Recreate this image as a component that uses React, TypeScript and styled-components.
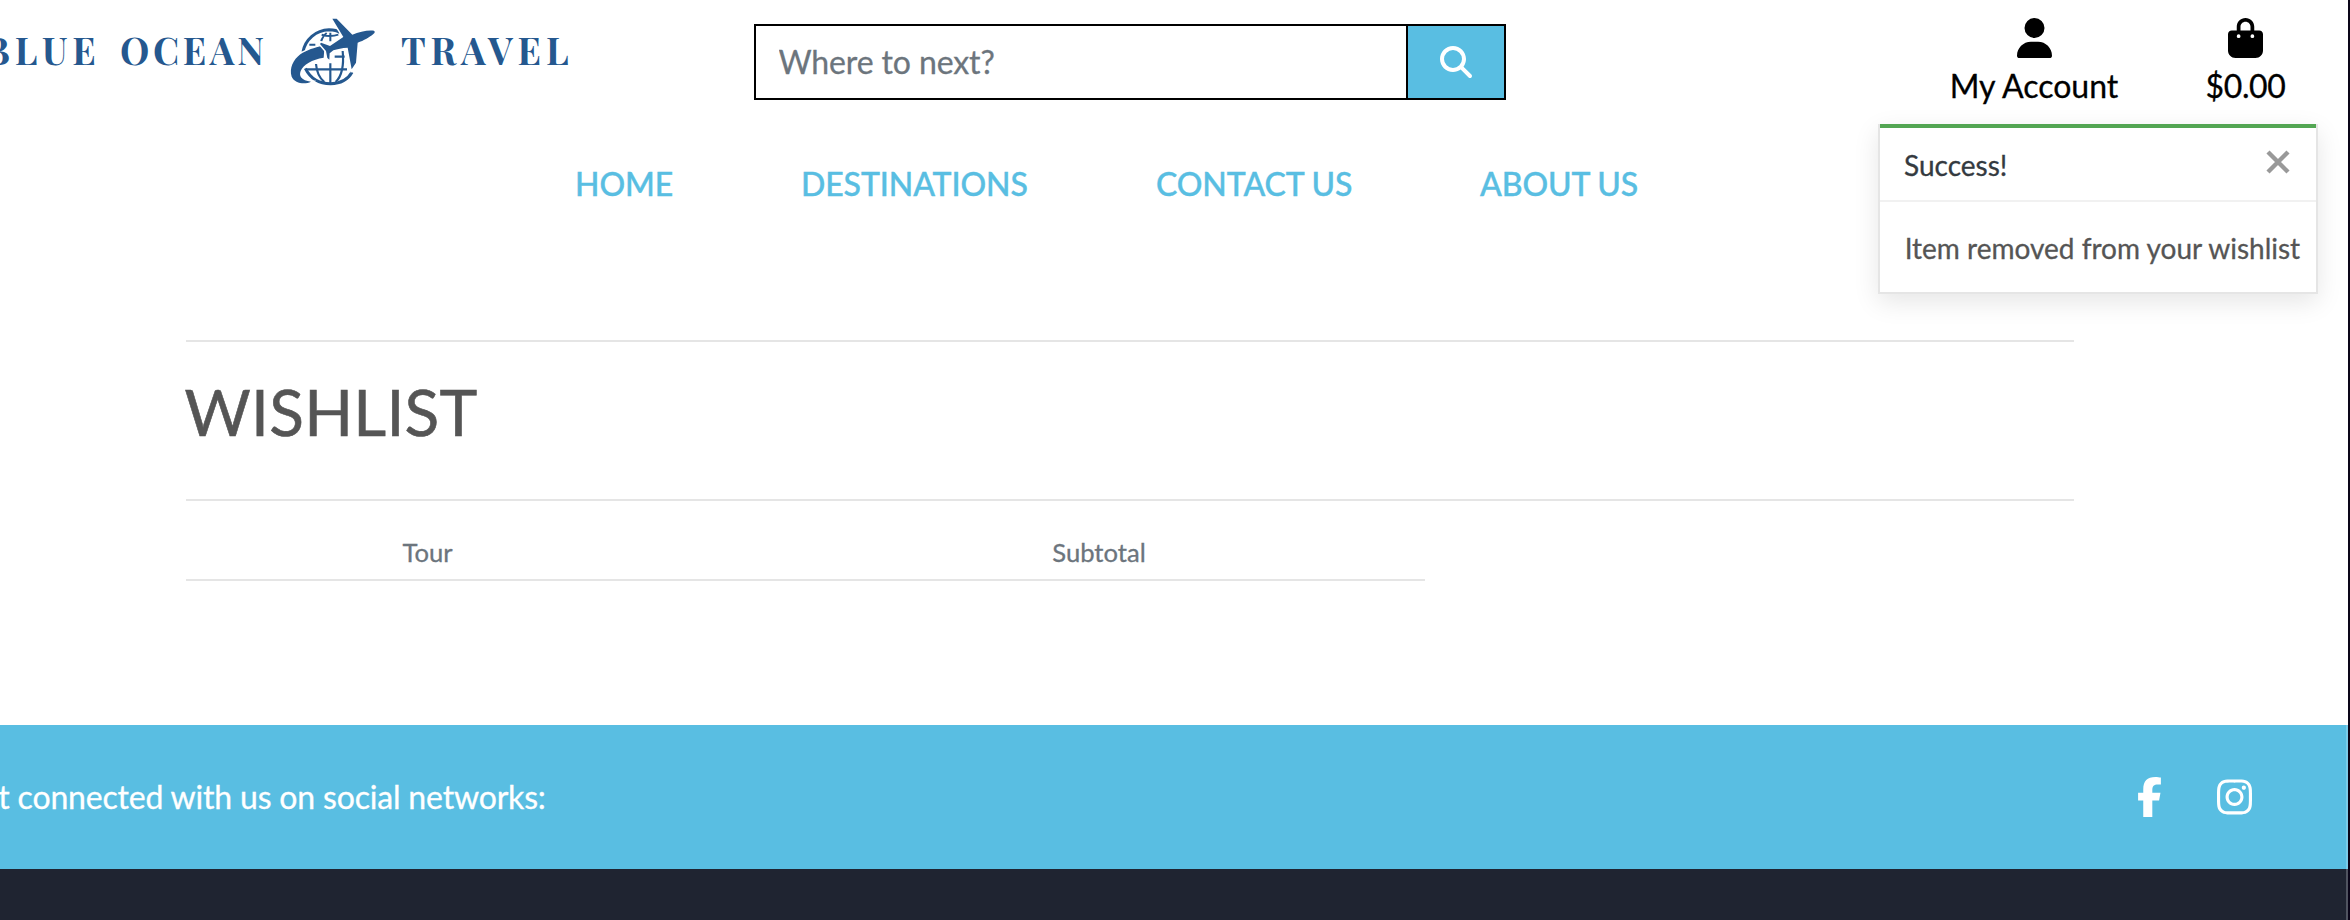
import React from "react";
import styled, { createGlobalStyle, css } from "styled-components";
import { FaUser, FaBagShopping, FaMagnifyingGlass, FaInstagram } from "react-icons/fa6";

const GlobalStyle = createGlobalStyle`
  * { box-sizing: border-box; }
  body {
    margin: 0;
    background: #fff;
    color: #555;
    font-family: Lato, "Liberation Sans", sans-serif;
    font-size: 32px;
    line-height: 1.5;
    overflow: hidden;
    -webkit-text-stroke: 0.3px;
  }
`;

const Page = styled.div`
  position: relative;
  width: 2350px;
  height: 920px;
  display: flex;
  flex-direction: column;
  overflow: hidden;
  border-right: 2px solid #0a0518;
`;

const TopBar = styled.header`
  flex: none;
  height: 120px;
  display: flex;
  align-items: flex-start;
`;

const Brand = styled.a`
  flex: none;
  width: 754px;
  height: 100px;
  display: flex;
  align-items: flex-start;
  color: #25588f;
  font-family: "Playfair Display", "Liberation Serif", serif;
  font-size: 37px;
  font-weight: 700;
  line-height: 60px;
  white-space: nowrap;
  -webkit-text-stroke: 0;
`;

const BrandWord = styled.span<{ $width: number; $spacing: number; $shift?: number }>`
  flex: none;
  width: ${(p) => p.$width}px;
  margin-left: ${(p) => p.$shift ?? 0}px;
  padding-top: 20px;
  letter-spacing: ${(p) => p.$spacing}px;
`;

const Globe = styled.svg`
  flex: none;
  width: 120px;
  height: 100px;
`;

const Search = styled.form`
  flex: none;
  display: flex;
  width: 752px;
  height: 76px;
  margin-top: 24px;
  border: 2px solid #000;
`;

const SearchInput = styled.input`
  flex: 1;
  min-width: 0;
  border: 0;
  outline: 0;
  padding: 0 22.5px;
  background: #fff;
  font: inherit;
  letter-spacing: -0.12px;
  &::placeholder { color: #6c757d; opacity: 1; }
`;

const SearchButton = styled.button`
  width: 98px;
  border: 0;
  border-left: 2px solid #000;
  padding: 0;
  display: flex;
  align-items: center;
  justify-content: center;
  background: #59bee2;
  color: #fff;
  font-size: 32px;
`;

const Account = styled.div<{ $left: number; $width: number; $spacing?: number }>`
  flex: none;
  margin-left: ${(p) => p.$left}px;
  width: ${(p) => p.$width}px;
  display: flex;
  flex-direction: column;
  align-items: center;
  padding-top: 18px;
  color: #000;
  letter-spacing: ${(p) => p.$spacing ?? 0}px;
  white-space: nowrap;
  & > svg { width: 35px; height: 40px; margin-bottom: 4px; }
`;

const Nav = styled.nav`
  height: 220px;
  padding: 40px 0 0 575px;
  display: flex;
  align-items: flex-start;
  flex: none;
`;

const NavLink = styled.a<{ $width: number }>`
  width: ${(p) => p.$width}px;
  color: #59bee2;
  font-weight: 500;
  letter-spacing: -0.1px;
  white-space: nowrap;
  -webkit-text-stroke: 0.4px;
`;

const line = css`border-top: 2px solid #e5e5e5;`;

const Main = styled.main`
  flex: none;
  width: 1888px;
  height: 385px;
  margin-left: 186px;
`;

const TitleBlock = styled.section`
  ${line}
  height: 159px;
  padding-top: 32px;
`;

const Title = styled.h1`
  margin: 0 0 0 -1.5px;
  font-size: 64px;
  font-weight: 400;
  line-height: 76px;
  letter-spacing: 0.25px;
  -webkit-text-stroke: 0.6px;
`;

const TableBlock = styled.section`
  ${line}
`;

const TableHead = styled.div`
  display: grid;
  grid-template-columns: 483px 652px;
  column-gap: 104px;
  width: 1239px;
  height: 80px;
  padding-top: 32px;
  border-bottom: 2px solid #e5e5e5;
  color: #6c757d;
  font-size: 25.6px;
  line-height: 38px;
  text-align: center;
`;

const Social = styled.section`
  flex: none;
  height: 144px;
  display: flex;
  align-items: center;
  background: #59bee2;
  color: #fff;
  border-right: 2px solid #7accea;
`;

const SocialText = styled.span`
  flex: none;
  width: 2178.5px;
  margin-left: -41.3px;
  letter-spacing: -0.18px;
  white-space: nowrap;
`;

const SocialLinks = styled.div`
  display: flex;
  gap: 55px;
  & > svg { height: 40px; flex: none; }
`;

const InstagramIcon = styled(FaInstagram)`
  width: 35px;
`;

const FooterBody = styled.footer`
  flex: 1;
  background: #1f2431;
  border-right: 2px solid #505460;
`;

const Toast = styled.aside`
  position: absolute;
  left: 1878px;
  top: 124px;
  width: 440px;
  height: 170px;
  background: #fff;
  border: 2px solid #e5e5e5;
  border-top: 0;
  box-shadow: 0 8px 24px rgba(0, 0, 0, 0.1);
  font-size: 28px;
`;

const ToastAccent = styled.div`
  height: 4px;
  background: #53a653;
`;

const ToastHeader = styled.div`
  height: 74px;
  display: flex;
  align-items: center;
  justify-content: space-between;
  padding: 2px 24px 0;
  border-bottom: 2px solid #f1f1f1;
  color: #343a40;
`;

const Close = styled.svg`
  width: 28px;
  height: 28px;
  margin-bottom: 6px;
  stroke: #999;
  stroke-width: 4.4;
`;

const ToastBody = styled.div`
  padding: 25px 0 0 24.7px;
  white-space: nowrap;
`;

function GlobeLogo() {
  return (
    <Globe viewBox="0 0 360 300" fill="#25588f">
      <g fill="none" stroke="#25588f" strokeWidth="6.5">
        <path d="M99 155C106 119 137 90 177 89c14 0 25 2 33 9" strokeWidth="9" />
        <path d="M181 98v26M170 99c-8 6-13 14-17 26M118 134h18M155 104c17 5 34 5 50 0" strokeWidth="6" />
        <path d="M106 205c15 30 41 46 76 46 29 0 51-11 64-34" strokeWidth="9" />
        <path d="M111 208h120M181 190v62M138 192c2 24 10 42 25 54M218 153c4 41-2 75-21 93M194 170h30" />
      </g>
      <g stroke="#fff" strokeWidth="9" paintOrder="stroke">
        <path d="M157 137l6 11-2 25c-35 6-61 20-69 40-6 16 2 28 31 32-19 9-49 5-58-15-8-25 5-51 26-67 19-14 43-20 66-26z" />
        <path d="M187 56h13l47 48c21-9 48-15 65-12 4 3 2 7-2 10-10 9-29 20-47 26l-5 60-13 20-12-65c-17 1-31 4-43 8l-11 9-1 19-6-5-4-21-18-21 3-4 27 10 40-27z" />
      </g>
    </Globe>
  );
}

function FacebookF() {
  return (
    <svg viewBox="0 0 320 512" width="25" height="40" fill="currentColor">
      <path d="M80 299.3V512H196V299.3h86.5l18-97.8H196V166.9c0-51.7 20.3-71.5 72.7-71.5 16.3 0 29.4.4 37 1.2V7.9C291.4 4 256.4 0 236.2 0 129.3 0 80 50.5 80 159.4v42.1H14v97.8z" />
    </svg>
  );
}

export default function App() {
  return (
    <>
      <GlobalStyle />
      <Page>
        <TopBar>
          <Brand>
            <BrandWord $shift={-15} $width={135} $spacing={4.9}>BLUE</BrandWord>
            <BrandWord $width={150} $spacing={3.6}>OCEAN</BrandWord>
            <GlobeLogo />
            <BrandWord $shift={11} $width={200} $spacing={4.9}>TRAVEL</BrandWord>
          </Brand>
          <Search>
            <SearchInput placeholder="Where to next?" />
            <SearchButton type="button" aria-label="Search">
              <FaMagnifyingGlass />
            </SearchButton>
          </Search>
          <Account $left={443} $width={170}>
            <FaUser />
            <span>My Account</span>
          </Account>
          <Account $left={85.5} $width={82} $spacing={-0.4}>
            <FaBagShopping />
            <span>$0.00</span>
          </Account>
        </TopBar>
        <Nav>
          <NavLink $width={226}>HOME</NavLink>
          <NavLink $width={355}>DESTINATIONS</NavLink>
          <NavLink $width={324}>CONTACT US</NavLink>
          <NavLink $width={160}>ABOUT US</NavLink>
        </Nav>
        <Main>
          <TitleBlock>
            <Title>WISHLIST</Title>
          </TitleBlock>
          <TableBlock>
            <TableHead>
              <span>Tour</span>
              <span>Subtotal</span>
            </TableHead>
          </TableBlock>
        </Main>
        <Social>
          <SocialText>Get connected with us on social networks:</SocialText>
          <SocialLinks>
            <FacebookF />
            <InstagramIcon />
          </SocialLinks>
        </Social>
        <FooterBody />
        <Toast>
          <ToastAccent />
          <ToastHeader>
            <span>Success!</span>
            <Close viewBox="0 0 28 28">
              <path d="M4 4l20 20M24 4L4 24" />
            </Close>
          </ToastHeader>
          <ToastBody>Item removed from your wishlist</ToastBody>
        </Toast>
      </Page>
    </>
  );
}
